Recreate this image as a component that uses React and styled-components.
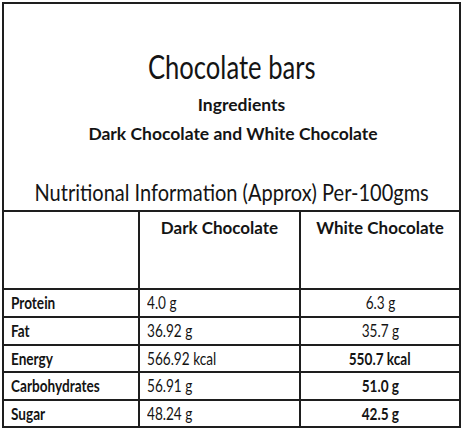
import React from "react";
import styled, { createGlobalStyle } from "styled-components";

const GlobalStyle = createGlobalStyle`
  html, body {
    margin: 0;
    padding: 0;
    background: #ffffff;
  }
  body {
    font-family: Lato, "Open Sans", sans-serif;
    color: #141414;
  }
`;

const line = "#1e1e1e";

const Card = styled.div`
  margin: 2px 0 0 2px;
  width: 459px;
  box-sizing: border-box;
  border: 2px solid ${line};
  border-bottom: none;
`;

const Heading = styled.div`
  display: flex;
  flex-direction: column;
  align-items: center;
  height: 208px;
  box-sizing: border-box;
  padding-top: 44px;
  border-bottom: 2px solid ${line};
`;

// the source picture is horizontally condensed, so text is squeezed to match
const Squeeze = styled.span`
  display: inline-block;
  white-space: nowrap;
  transform: scaleX(${(p) => p.$x || 1});
  transform-origin: ${(p) => p.$origin || "center"};
`;

const Title = styled.h1`
  margin: 0;
  font-size: 32px;
  font-weight: 400;
  line-height: 38px;
`;

const Sub = styled.div`
  margin: ${(p) => p.$top}px 0 0 ${(p) => p.$shift || 0}px;
  font-size: 17.5px;
  font-weight: 700;
  line-height: 22px;
`;

const Caption = styled.div`
  margin-top: 33px;
  font-size: 23px;
  line-height: 28px;
`;

const Grid = styled.div`
  display: grid;
  grid-template-columns: 136px 161px 1fr;
  grid-template-rows: 78px 28px 28px 27px 28px 27px;
`;

const HeadCell = styled.div`
  box-sizing: border-box;
  border-bottom: 2px solid ${line};
  border-right: ${(p) => (p.$last ? "none" : `2px solid ${line}`)};
  padding-top: 6px;
  text-align: center;
  font-size: 17px;
  font-weight: 700;
  line-height: 20px;
`;

const Cell = styled.div`
  box-sizing: border-box;
  display: flex;
  align-items: center;
  justify-content: ${(p) => (p.$center ? "center" : "flex-start")};
  padding: 0 7px;
  border-bottom: 2px solid ${line};
  border-right: ${(p) => (p.$last ? "none" : `2px solid ${line}`)};
  font-size: 17px;
  font-weight: ${(p) => (p.$bold ? 700 : 400)};
  line-height: 20px;
`;

const rows = [
  ["Protein", "4.0 g", "6.3 g", false],
  ["Fat", "36.92 g", "35.7 g", false],
  ["Energy", "566.92 kcal", "550.7 kcal", true],
  ["Carbohydrates", "56.91 g", "51.0 g", true],
  ["Sugar", "48.24 g", "42.5 g", true],
];

export default function App() {
  return (
    <>
      <GlobalStyle />
      <Card>
        <Heading>
          <Title>
            <Squeeze $x={0.8}>Chocolate bars</Squeeze>
          </Title>
          <Sub $top={8} $shift={20}>Ingredients</Sub>
          <Sub $top={7} $shift={3}>Dark Chocolate and White Chocolate</Sub>
          <Caption>
            <Squeeze $x={0.87}>Nutritional Information (Approx) Per-100gms</Squeeze>
          </Caption>
        </Heading>
        <Grid>
          <HeadCell />
          <HeadCell>Dark Chocolate</HeadCell>
          <HeadCell $last>White Chocolate</HeadCell>
          {rows.map(([name, dark, white, strong]) => (
            <React.Fragment key={name}>
              <Cell $bold>
                <Squeeze $x={0.8} $origin="left">{name}</Squeeze>
              </Cell>
              <Cell>
                <Squeeze $x={0.8} $origin="left">{dark}</Squeeze>
              </Cell>
              <Cell $center $last $bold={strong}>
                <Squeeze $x={0.8}>{white}</Squeeze>
              </Cell>
            </React.Fragment>
          ))}
        </Grid>
      </Card>
    </>
  );
}
